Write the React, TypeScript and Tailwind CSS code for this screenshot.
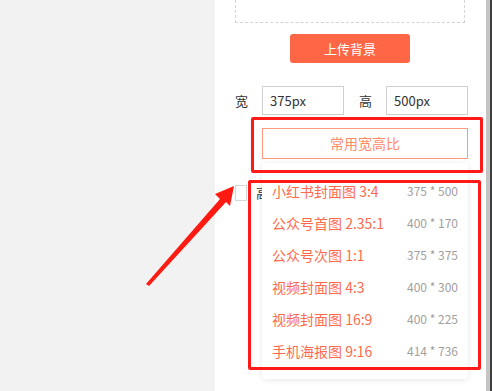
import React from "react";

const items: [string, string][] = [
  ["小红书封面图 3:4", "375 * 500"],
  ["公众号首图 2.35:1", "400 * 170"],
  ["公众号次图 1:1", "375 * 375"],
  ["视频封面图 4:3", "400 * 300"],
  ["视频封面图 16:9", "400 * 225"],
  ["手机海报图 9:16", "414 * 736"],
];

export default function App() {
  return (
    <div
      className="relative flex h-[391px] w-[492px] overflow-hidden bg-[#f2f2f2]"
      style={{ fontFamily: '"Noto Sans CJK SC", "Noto Sans", sans-serif' }}
    >
      <div className="w-[215px] shrink-0" />
      <div className="relative flex-1 bg-white">
        <div className="pl-[20px] pr-[21px]">
          <div className="h-[23px] w-[230px] border-x border-b border-dashed border-[#d4d4d4]" />
          <div className="mt-[11px] flex w-[230px] justify-center">
            <div className="flex h-[29px] w-[120px] items-center justify-center rounded-[3px] bg-[#ff6645] text-[13px] text-white">
              上传背景
            </div>
          </div>
          <div className="mt-[23px] flex items-center text-[13px] text-[#333]">
            <span className="w-[27px]">宽</span>
            <div className="flex h-[29px] w-[82px] items-center border border-[#cfcfcf] pl-[7px] text-[#333]">375px</div>
            <span className="ml-[15px] w-[27px]">高</span>
            <div className="flex h-[29px] w-[82px] items-center border border-[#cfcfcf] pl-[7px] text-[#333]">500px</div>
          </div>
          <div className="mt-[13px] ml-[27px] flex h-[31px] w-[206px] items-center justify-center border border-[#ff9a7c] text-[14px] text-[#ff8a66]">
            常用宽高比
          </div>
          <div className="mt-[24px] flex items-center">
            <div className="h-[16px] w-[12px] border border-[#d6d6d6] bg-white" />
            <span className="ml-[9px] text-[13px] text-[#333]">高</span>
          </div>
        </div>

        {/* dropdown */}
        <div className="absolute left-[47px] top-[163px] w-[206px] rounded-[4px] bg-white pb-[12px] pt-[12px] shadow-[0_1px_6px_rgba(0,0,0,0.10)]">
          {items.map(([l, r]) => (
            <div key={l} className="flex h-[32px] items-center justify-between pl-[10px] pr-[10px]">
              <span className="text-[14px] text-[#ff6a4d]">{l}</span>
              <span className="text-[12px] text-[#a0a0a0]">{r}</span>
            </div>
          ))}
        </div>

        {/* scrollbar */}
        <div className="absolute right-0 top-0 flex h-full">
          <div className="w-[4px] bg-[#c4c4c4]" />
          <div className="w-[2px] bg-[#3f3f3f]" />
        </div>
      </div>

      {/* annotations */}
      <div className="pointer-events-none absolute left-[251px] top-[117px] h-[56px] w-[232px] rounded-[2px] border-[3px] border-[#ff1a1a]" />
      <div className="pointer-events-none absolute left-[248px] top-[180px] h-[190px] w-[233px] rounded-[2px] border-[3px] border-[#ff1a1a]" />
      <svg className="pointer-events-none absolute left-0 top-0" width="492" height="391">
        <polygon
          points="146,284 220,199 215,194 234,186 230,206 226,202 149,286"
          fill="#ff1a12"
        />
      </svg>
    </div>
  );
}
